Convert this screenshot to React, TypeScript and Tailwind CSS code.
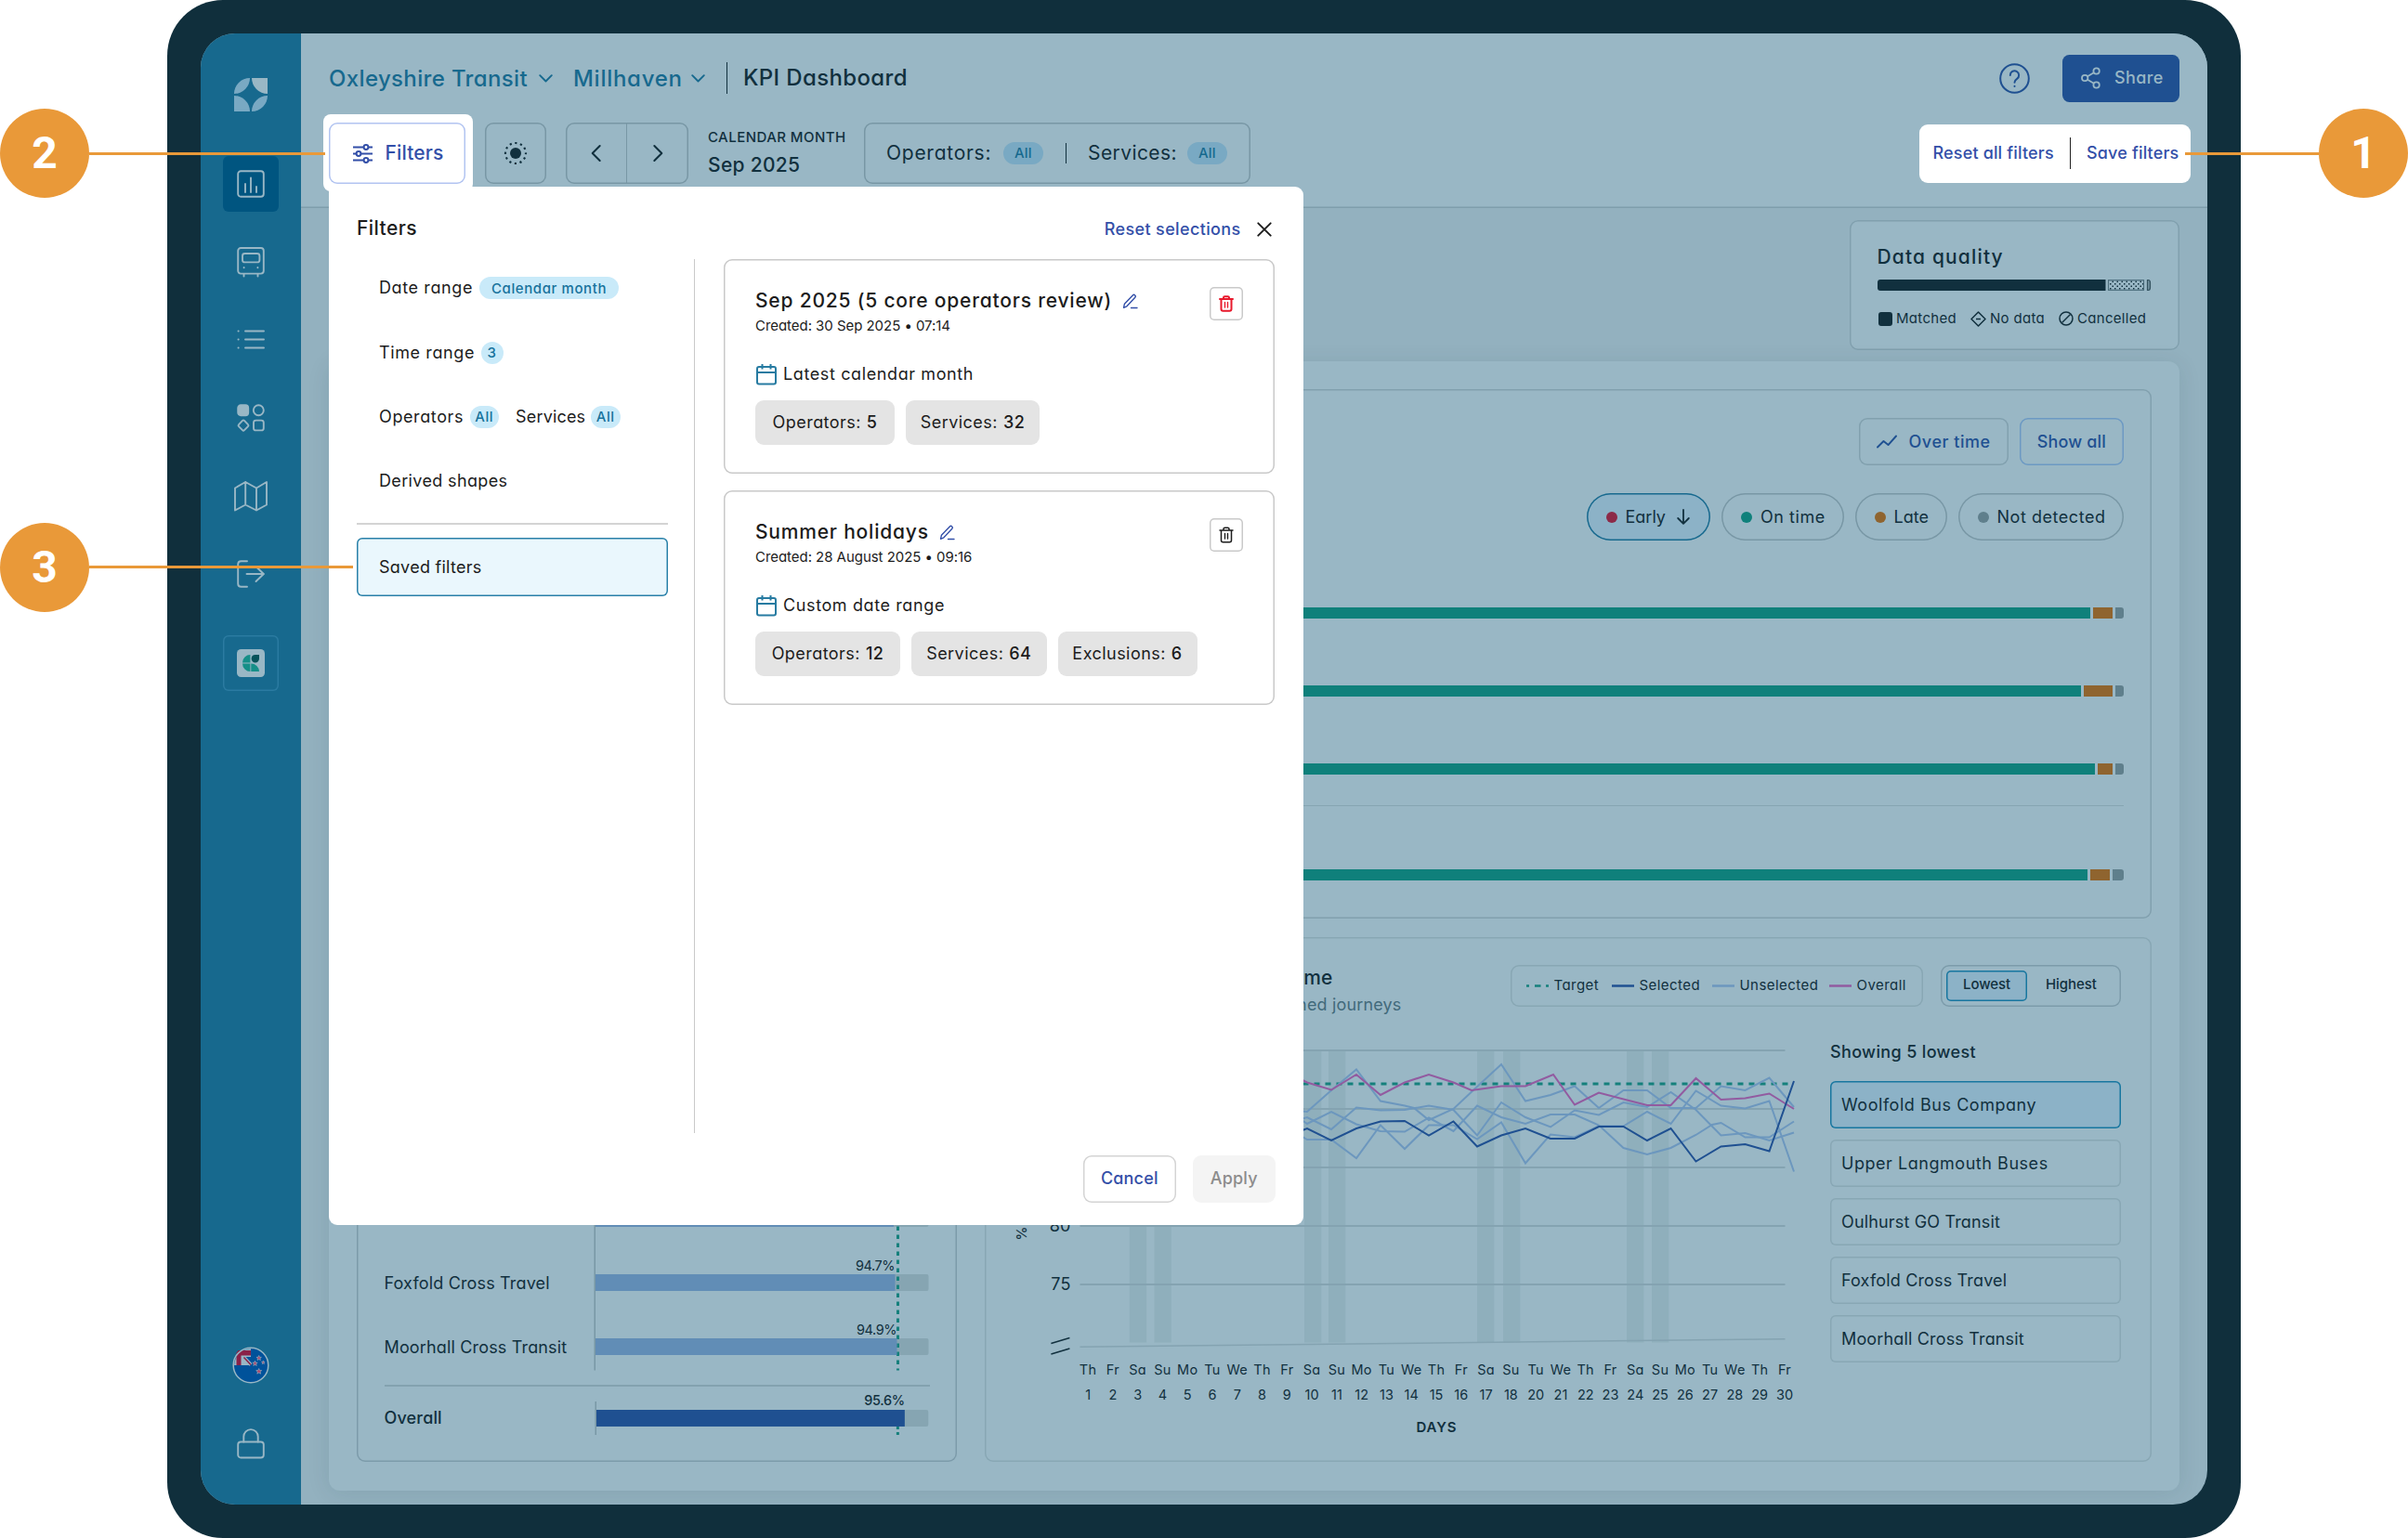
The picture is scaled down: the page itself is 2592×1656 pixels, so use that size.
import type { ReactNode } from "react";

const DAY_NAMES = "Th Fr Sa Su Mo Tu We Th Fr Sa Su Mo Tu We Th Fr Sa Su Tu We Th Fr Sa Su Mo Tu We Th Fr".split(" ");
const DAY_NUMBERS = [1, 2, 3, 4, 5, 6, 7, 8, 9, 10, 11, 12, 13, 14, 15, 16, 17, 18, 20, 21, 22, 23, 24, 25, 26, 27, 28, 29, 30];

const WEEKENDS = [1215.8, 1242.5, 1404, 1430, 1590, 1618, 1751, 1778];

const UNSELECTED_LINES = [
  "1402,1196.5 1407,1197 1433,1174 1460,1151.5 1486,1185.5 1512,1190.5 1522,1193 1538,1206 1564.5,1194 1590,1170 1616,1146 1642,1185.5 1669,1179 1695,1169.5 1721,1193 1747.5,1174 1773,1174 1798.5,1193 1825.5,1193 1852.5,1169.5 1878.5,1174 1904.5,1160.5 1931,1192",
  "1402,1206.5 1407,1210 1433,1197 1460,1210.5 1486,1218 1512,1218.5 1538,1203.5 1564.5,1218 1590,1190.5 1616,1203 1642,1210 1669,1200 1695,1200 1721,1211.5 1747.5,1236 1773,1243 1798.5,1236 1825.5,1222 1843,1211 1852.5,1209 1878.5,1224.5 1904.5,1224.5 1931,1207.5",
  "1402,1204.5 1407,1203 1433,1216 1460,1192.5 1486,1195.5 1512,1195 1538,1190.5 1564.5,1195 1590,1222.5 1616,1187 1642,1203 1669,1213.5 1695,1195.5 1721,1200.5 1747.5,1187 1773,1192 1798.5,1176 1825.5,1195 1852.5,1222.5 1878.5,1220 1904.5,1228 1931,1219.5",
  "1402,1224 1407,1227 1433,1227 1460,1247 1486,1211.5 1512,1237 1538,1211.5 1564.5,1211.5 1590,1226.5 1616,1208.5 1642,1252.5 1669,1221.5 1695,1224.5 1721,1212.5 1747.5,1212.5 1773,1197 1798.5,1210 1825.5,1174.5 1852.5,1190.5 1878.5,1193.5 1904.5,1185.5 1931,1261.5",
];
const OVERALL_LINE =
  "1402,1163 1407,1165.5 1433,1173.5 1460,1157 1486,1179 1512,1165.5 1538,1157 1564.5,1165.5 1584,1174 1616,1169.5 1642,1169.5 1672,1157 1695,1189.5 1721,1176.5 1747.5,1183.5 1773,1190 1798.5,1190 1825.5,1161 1852.5,1184 1878.5,1182.5 1904.5,1177.5 1931,1194";
const SELECTED_LINE =
  "1402,1217 1407,1215 1433,1228 1460,1215 1486,1207.5 1512,1207 1538,1222.5 1564.5,1207.5 1590,1234.5 1616,1222.5 1642,1215 1669,1226 1695,1226 1721,1213 1747.5,1213 1773,1228 1798.5,1215 1825.5,1250.5 1852.5,1234.5 1878.5,1232 1904.5,1239.5 1931,1164";

const OPERATORS = ["Woolfold Bus Company", "Upper Langmouth Buses", "Oulhurst GO Transit", "Foxfold Cross Travel", "Moorhall Cross Transit"];

function Chevron({ className }: { className?: string }) {
  return (
    <svg className={className} width="15" height="9" viewBox="0 0 15 9" fill="none" stroke="currentColor" strokeWidth="1.9" strokeLinecap="round" strokeLinejoin="round">
      <path d="M1.2 1.2 7.5 7.5l6.3-6.3" />
    </svg>
  );
}

function Logo() {
  return (
    <svg width="36" height="36" viewBox="0 0 36 36" fill="#79a9c3">
      <path d="M0 17A17 17 0 0 1 17 0 17 17 0 0 1 0 17Z" />
      <path d="M19 0H36V17A17 17 0 0 1 19 0Z" fill="#99b7c5" />
      <path d="M0 36V19A17 17 0 0 1 17 36Z" />
      <path d="M36 19A17 17 0 0 1 19 36 17 17 0 0 1 36 19Z" />
    </svg>
  );
}

function NavIcon({ children }: { children: ReactNode }) {
  return (
    <svg width="36" height="36" viewBox="0 0 36 36" fill="none" stroke="#99b7c5" strokeWidth="1.9" strokeLinecap="round" strokeLinejoin="round">
      {children}
    </svg>
  );
}

function Sidebar() {
  return (
    <aside className="flex w-[108px] shrink-0 flex-col items-center bg-[#17698e] pt-12 pb-9">
      <Logo />
      <nav className="mt-12 flex flex-col gap-6">
        <div className="flex size-[60px] items-center justify-center rounded-md bg-[#005580]">
          <NavIcon>
            <rect x="4.2" y="4.2" width="27.6" height="27.6" rx="3" />
            <path d="M12 18v9M18 11.5V27M24 21v6" />
          </NavIcon>
        </div>
        <div className="flex size-[60px] items-center justify-center">
          <NavIcon>
            <rect x="4.2" y="3" width="27.6" height="27.6" rx="3" />
            <rect x="9" y="9" width="18.4" height="9.4" rx="2.5" />
            <path d="M10.5 31v2.6M25.5 31v2.6M10.6 24v.3M25.4 24v.3" />
          </NavIcon>
        </div>
        <div className="flex size-[60px] items-center justify-center">
          <NavIcon>
            <path d="M12 8.5h20M12 17.5h20M12 26.5h20M4.5 8.5h.2M4.5 17.5h.2M4.5 26.5h.2" />
          </NavIcon>
        </div>
        <div className="flex size-[60px] items-center justify-center">
          <NavIcon>
            <rect x="4.2" y="4.2" width="11" height="11" rx="3" fill="#99b7c5" />
            <circle cx="26.3" cy="9.7" r="5.5" />
            <path d="M9 20.9q1-1 2 0l4 4.3q1 1 0 2l-4 4q-1 1-2 0l-4-4q-1-1 0-2z" />
            <rect x="21" y="20.6" width="10.8" height="10.8" rx="2.5" />
          </NavIcon>
        </div>
        <div className="flex size-[60px] items-center justify-center">
          <NavIcon>
            <path d="M1 9.5 12.2 3 24 9.5 35 3v24.5L24 33.5 12.2 27.5 1 33.5zM12.2 3v24.5M24 9.5v24" />
          </NavIcon>
        </div>
        <div className="flex size-[60px] items-center justify-center">
          <NavIcon>
            <path d="M14 4.2H7.6Q4.2 4.2 4.2 7.6v20.8q0 3.4 3.4 3.4H14M13.5 18H32M23.5 10l8.3 8-8.3 8" />
          </NavIcon>
        </div>
        <div className="mt-3 flex size-[60px] items-center justify-center rounded-md inset-ring-[1.5px] inset-ring-[#2b7ba1]">
          <div className="flex size-[30px] items-center justify-center rounded-[4.5px] bg-[#99b7c5]">
            <svg width="18" height="18" viewBox="0 0 18 18" fill="#158f88">
              <path d="M8.4 0V8.4H0A8.4 8.4 0 0 1 8.4 0ZM0 9.4H8.4V18A8.6 8.6 0 0 1 0 9.4ZM9.3 9.6A8.6 8.6 0 0 1 18 18H9.3Z" />
              <path d="M9.6 4.3A4.4 4.4 0 0 1 14 0h4v4.3A4.2 4.2 0 0 1 9.6 4.3Z" fill="#06535a" />
            </svg>
          </div>
        </div>
      </nav>
      <div className="mt-auto flex flex-col gap-6">
        <div className="flex size-[60px] items-center justify-center">
          <svg width="40" height="40" viewBox="0 0 40 40">
            <circle cx="20" cy="20" r="18.6" fill="#00529a" />
            <path d="M20 2.2V20H2.2A17.8 17.8 0 0 1 20 2.2Z" fill="#99b7c5" />
            <path d="M4.5 20V6.5L6.5 4H20V9.5H9.5V20Z" fill="#8a2148" />
            <path d="M13 11H20V18Z" fill="#00529a" />
            <path d="M12 11 20 19.5" stroke="#99b7c5" strokeWidth="4" />
            <path d="M12.5 11.5 20 19.5" stroke="#8a2148" strokeWidth="1.6" />
            <g fill="#b0496c" stroke="#99b7c5" strokeWidth=".6">
              <path d="m28.7 9.5.8 1.8 1.9.1-1.5 1.3.5 1.9-1.7-1-1.7 1 .5-1.9-1.5-1.3 1.9-.1z" />
              <path d="m24.5 15.3.8 1.8 1.9.1-1.5 1.3.5 1.9-1.7-1-1.7 1 .5-1.9-1.5-1.3 1.9-.1z" />
              <path d="m33.3 15 .5 1.3 1.3.1-1 .9.3 1.3-1.1-.7-1.1.7.3-1.3-1-.9 1.3-.1z" />
              <path d="m28.7 23.5.9 2 2.1.1-1.6 1.5.5 2.1-1.9-1.1-1.9 1.1.5-2.1-1.6-1.5 2.1-.1z" />
            </g>
            <circle cx="20" cy="20" r="18.8" fill="none" stroke="#99b7c5" strokeWidth="1.5" />
          </svg>
        </div>
        <div className="flex size-[60px] items-center justify-center">
          <NavIcon>
            <rect x="4.2" y="16.5" width="27.6" height="17" rx="3" />
            <path d="M10.3 16.5v-5.700a7.7 7.7 0 0 1 15.400 0v5.700" />
          </NavIcon>
        </div>
      </div>
    </aside>
  );
}

function Header() {
  return (
    <header className="h-[187.5px] shrink-0 bg-[#99b7c5] px-[30px] pt-[22.5px] shadow-[inset_0_-1.5px_0_#7f9eac]">
      <div className="flex h-[51px] items-center text-2xl font-medium tracking-[0.015em] text-[#17698e]">
        <span className="w-[226px] pt-[2px] whitespace-nowrap">Oxleyshire Transit</span>
        <Chevron />
        <span className="ml-[22px] w-[127px] pt-[2px] tracking-[0.03em] whitespace-nowrap">Millhaven</span>
        <Chevron />
        <span className="ml-[23px] h-[34px] w-px bg-[#11303e]" />
        <span className="ml-[17px] whitespace-nowrap text-[#11303e]">KPI Dashboard</span>
        <svg className="ml-auto" width="33" height="33" viewBox="0 0 33 33" fill="none" stroke="#1f5091" strokeWidth="2" strokeLinecap="round">
          <circle cx="16.5" cy="16.5" r="15.3" />
          <path d="M11.8 13a4.7 4.7 0 1 1 7.3 3.9c-1.800 1.200-2.600 2-2.600 3.900M16.5 24.700v.2" />
        </svg>
        <button className="ml-[35px] flex h-[51px] w-[126px] items-center rounded-[7.5px] bg-[#1f5091] pl-[20px] text-lg font-medium text-[#99b7c5]">
          <svg className="mr-[15px]" width="21" height="24" viewBox="0 0 21 24" fill="none" stroke="currentColor" strokeWidth="1.8">
            <circle cx="4.2" cy="12" r="3.2" />
            <circle cx="16.6" cy="4.5" r="3.2" />
            <circle cx="16.6" cy="19.5" r="3.2" />
            <path d="m7 10.300 6.800-4.100M7 13.700l6.800 4.100" />
          </svg>
          Share
        </button>
      </div>

      <div className="mt-[22.5px] flex h-[66px] items-center">
        <div className="relative h-[66px] w-[147px]">
          <div className="absolute -top-[9px] -right-[8px] -bottom-[8px] -left-[6.5px] rounded-[8px] bg-white" />
          <button className="relative flex size-full items-center rounded-[9px] pl-[26px] text-[21px] font-medium text-[#334fa8] inset-ring-[1.5px] inset-ring-[#b2c4f1]">
            <svg className="mr-[13.5px]" width="21" height="21" viewBox="0 0 21 21" fill="none" stroke="currentColor" strokeWidth="2">
              <path d="M0 3.500h11.500M16.500 3.500H21M0 10.500h3.500M8.500 10.500H21M0 17.500h11.500M16.500 17.500H21" />
              <circle cx="14" cy="3.5" r="2.4" />
              <circle cx="6" cy="10.5" r="2.4" />
              <circle cx="14" cy="17.5" r="2.4" />
            </svg>
            Filters
          </button>
        </div>
        <button className="ml-[21px] flex size-[66px] items-center justify-center rounded-[9px] inset-ring-[1.5px] inset-ring-[#7897a5]">
          <svg width="26" height="26" viewBox="0 0 26 26">
            <circle cx="13" cy="13" r="6" fill="#11303e" />
            <circle cx="13" cy="13" r="11" fill="none" stroke="#11303e" strokeWidth="2.2" strokeDasharray="2.2 3.56" strokeDashoffset="1.1" />
          </svg>
        </button>
        <div className="ml-[21px] flex h-[66px] w-[132px] items-center rounded-[9px] text-[#11303e] inset-ring-[1.5px] inset-ring-[#7897a5]">
          <div className="flex h-full w-[65px] items-center justify-center">
            <Chevron className="h-[12px] w-[19px] rotate-90 stroke-[1.6]" />
          </div>
          <div className="flex h-full w-[67px] items-center justify-center border-l border-[#7897a5]">
            <Chevron className="h-[12px] w-[19px] -rotate-90 stroke-[1.6]" />
          </div>
        </div>
        <div className="ml-[21px] flex w-[168px] flex-col text-[#11303e]">
          <span className="text-[15px] leading-[24px] font-medium tracking-[0.03em] whitespace-nowrap">CALENDAR MONTH</span>
          <span className="pt-px text-[21px] leading-[34px] font-medium tracking-[0.015em]">Sep 2025</span>
        </div>
        <div className="flex h-[66px] w-[415.5px] items-center rounded-[9px] pl-[24px] text-[21px] text-[#11303e] inset-ring-[1.5px] inset-ring-[#7897a5]">
          <span className="w-[125.5px] tracking-[0.035em]">Operators:</span>
          <span className="flex h-6 w-[43.5px] items-center justify-center rounded-full bg-[#79a9c3] text-[15px] font-medium text-[#17698e]">All</span>
          <span className="ml-[24px] h-[22px] w-px bg-[#11303e]" />
          <span className="ml-[23px] w-[106.5px] tracking-[0.02em]">Services:</span>
          <span className="flex h-6 w-[43.5px] items-center justify-center rounded-full bg-[#79a9c3] text-[15px] font-medium text-[#17698e]">All</span>
        </div>
        <div className="-mr-[12px] ml-auto flex h-[63px] w-[292.5px] items-center rounded-[9px] bg-white pl-[15px] text-lg font-medium whitespace-nowrap text-[#334fa8]">
          <span className="w-[147.5px]">Reset all filters</span>
          <span className="h-[34.5px] w-px bg-[#222]" />
          <span className="ml-[17px]">Save filters</span>
        </div>
      </div>
    </header>
  );
}

function DataQuality() {
  return (
    <section className="ml-auto h-[139.5px] w-[355px] rounded-[9px] bg-[#99b7c5] px-[29.5px] pt-[24px] text-[#11303e] inset-ring-[1.5px] inset-ring-[#81a0ae]">
      <h2 className="text-[21px] leading-[32px] font-medium tracking-[0.055em]">Data quality</h2>
      <svg className="mt-[7px]" width="295" height="14" viewBox="0 0 295 14">
        <defs>
          <pattern id="dots" width="5" height="5" patternUnits="userSpaceOnUse">
            <rect x="0" y="0" width="1.5" height="1.5" fill="#11303e" />
            <rect x="2.5" y="2.5" width="1.5" height="1.5" fill="#11303e" />
          </pattern>
        </defs>
        <path d="M3 1H245.500V13H3Q0 13 0 10V4Q0 1 3 1Z" fill="#11303e" />
        <rect x="248.5" y="1.7" width="38" height="10.6" fill="url(#dots)" stroke="#4a6c7b" strokeWidth="1.2" />
        <path d="M290.500 1.500h1q2 0 2 3v5q0 3-2 3h-1z" fill="#6f8f9d" stroke="#33525f" strokeWidth="1.2" />
      </svg>
      <div className="mt-[18px] flex items-center text-[15px] leading-[22px] tracking-[0.02em] whitespace-nowrap">
        <span className="mr-[4.5px] ml-[1px] size-[15px] rounded-[3px] bg-[#11303e]" />
        <span className="w-[80px]">Matched</span>
        <svg className="mr-[4px]" width="17" height="17" viewBox="0 0 17 17" fill="none" stroke="currentColor" strokeWidth="1.5" strokeLinejoin="round">
          <path d="M8.500 1 16 8.500 8.500 16 1 8.500zM6 8.500h5" />
        </svg>
        <span className="w-[74px]">No data</span>
        <svg className="mr-[4px]" width="16" height="16" viewBox="0 0 16 16" fill="none" stroke="currentColor" strokeWidth="1.5">
          <circle cx="8" cy="8" r="7" />
          <path d="m3.500 12.500 9-9" />
        </svg>
        <span>Cancelled</span>
      </div>
    </section>
  );
}

const PUNCTUALITY_ROWS = [
  { late: "w-[21px]", none: "w-[9px]" },
  { late: "w-[31.5px]", none: "w-[9px]" },
  { late: "w-[16.5px]", none: "w-[9px]" },
];

function PunctualityBar({ late, none }: { late: string; none: string }) {
  return (
    <div className="ml-[258px] flex h-[12px] gap-[3px]">
      <div className="flex-1 bg-[#0f807b]" />
      <div className={`bg-[#8f642f] ${late}`} />
      <div className={`rounded-r-[3px] bg-[#5f7f8c] ${none}`} />
    </div>
  );
}

function Punctuality() {
  const pill = "flex h-[51px] items-center rounded-full pl-[21px] inset-ring-[1.5px]";
  return (
    <section className="flex h-[570px] flex-col rounded-[9px] px-[30px] pt-[31.5px] text-lg text-[#11303e] inset-ring-[1.5px] inset-ring-[#81a0ae]">
      <div className="flex justify-end gap-3 font-medium text-[#1f5091]">
        <button className="flex h-[51px] w-[160.5px] items-center rounded-[9px] pl-[18.5px] tracking-[0.03em] inset-ring-[1.5px] inset-ring-[#81a0ae]">
          <svg className="mr-[13px]" width="22" height="15" viewBox="0 0 22 15" fill="none" stroke="currentColor" strokeWidth="1.9" strokeLinecap="round" strokeLinejoin="round">
            <path d="M1 13.500 7.500 7l5 4L21 1.500" />
          </svg>
          Over time
        </button>
        <button className="flex h-[51px] w-[112.5px] items-center justify-center rounded-[9px] inset-ring-[1.5px] inset-ring-[#6c99c3]">Show all</button>
      </div>
      <div className="mt-[30px] flex justify-end gap-3 tracking-[0.03em]">
        <div className={`${pill} w-[133.5px] bg-[#8cb2c7] tracking-normal inset-ring-[#17698e]`}>
          <span className="mr-[9px] size-3 rounded-full bg-[#8c2a48]" />
          Early
          <svg className="ml-[12px]" width="14" height="17" viewBox="0 0 14 17" fill="none" stroke="currentColor" strokeWidth="1.8" strokeLinecap="round" strokeLinejoin="round">
            <path d="M7 1v14.500M1.200 10 7 15.800 12.800 10" />
          </svg>
        </div>
        <div className={`${pill} w-[131.5px] inset-ring-[#7897a5]`}>
          <span className="mr-[9px] size-3 rounded-full bg-[#0f807b]" />
          On time
        </div>
        <div className={`${pill} w-[99px] tracking-normal inset-ring-[#7897a5]`}>
          <span className="mr-[9px] size-3 rounded-full bg-[#8f642f]" />
          Late
        </div>
        <div className={`${pill} w-[178.5px] inset-ring-[#7897a5]`}>
          <span className="mr-[9px] size-3 rounded-full bg-[#5f7f8c]" />
          Not detected
        </div>
      </div>
      <div className="mt-[72px] flex flex-col gap-[72px]">
        {PUNCTUALITY_ROWS.map((row, i) => (
          <PunctualityBar key={i} {...row} />
        ))}
      </div>
      <div className="mt-[33px] mb-[68px] h-px bg-[#86a5b2]" />
      <PunctualityBar late="w-[21px]" none="w-[12px]" />
    </section>
  );
}

function OperatorScores() {
  return (
    <section className="flex w-[646px] flex-col justify-end rounded-[9px] px-[29.5px] pb-[26px] text-lg text-[#11303e] inset-ring-[1.5px] inset-ring-[#7c9baa]">
      <div className="flex">
        <div className="w-[227px]">
          {OPERATORS.slice(2).map((name, i) => (
            <div key={name} className={`flex h-[69px] items-center whitespace-nowrap ${i === 0 ? "pb-[4px]" : ""}`}>
              {name}
            </div>
          ))}
        </div>
        <svg width="362" height="207" viewBox="640 1278.5 362 207" className="overflow-visible text-[14.5px] tracking-[-0.03em]" fill="#11303e">
          <g fill="#86a5b2">
            <rect x="642" y="1303.5" width="358.5" height="18" rx="2" />
            <rect x="642" y="1372.5" width="358.5" height="18" rx="2" />
            <rect x="642" y="1441.5" width="358.5" height="18" rx="2" />
          </g>
          <path d="M967.500 1303V1476" stroke="#15807c" strokeWidth="3" strokeDasharray="4.5 4.5" />
          <g fill="#618db6">
            <rect x="642" y="1303.5" width="321" height="18" />
            <rect x="642" y="1372.5" width="322.5" height="18" />
            <rect x="642" y="1441.5" width="324.5" height="18" />
          </g>
          <path d="M641.250 1279V1476" stroke="#7897a5" strokeWidth="1.5" />
          <text x="964" y="1368" textAnchor="end">94.7%</text>
          <text x="966" y="1437" textAnchor="end">94.9%</text>
        </svg>
      </div>
      <div className="mt-[6px] h-[1.5px] bg-[#83a2af]" />
      <div className="flex font-medium">
        <div className="flex w-[227px] items-center pt-[13px]">Overall</div>
        <svg width="362" height="55" viewBox="640 1493 362 55" className="text-[14.5px] tracking-[-0.02em]" fill="#11303e">
          <path d="M967.500 1536V1545" stroke="#15807c" strokeWidth="3" strokeDasharray="3 3" />
          <rect x="642" y="1518" width="358.5" height="18" rx="2" fill="#86a5b2" />
          <rect x="642" y="1518" width="333" height="18" fill="#1f5091" />
          <path d="M641.250 1509V1545" stroke="#7897a5" strokeWidth="1.5" />
          <text x="975" y="1512.5" textAnchor="end">95.6%</text>
        </svg>
      </div>
    </section>
  );
}

function LegendLine({ color, dash }: { color: string; dash?: string }) {
  return (
    <svg className="mr-[6px] shrink-0" width="24" height="3" viewBox="0 0 24 3">
      <path d="M0 1.500H24" stroke={color} strokeWidth="2.5" strokeDasharray={dash} />
    </svg>
  );
}

function TimeChart() {
  return (
    <svg width="850" height="340" viewBox="1090 1122 850 340" fill="none" className="text-lg">
      <g fill="#8fafbc">
        {WEEKENDS.map((x) => (
          <rect key={x} x={x} y="1131" width="18.3" height="314.5" />
        ))}
      </g>
      <g stroke="#84a3b1" strokeWidth="1.8">
        <path d="M1162.500 1131H1921.500M1162.500 1194H1921.500M1162.500 1257H1921.500M1162.500 1320H1921.500M1162.500 1383H1921.500" />
        <path d="M1162.500 1450.200 1921.500 1441.700" strokeWidth="1.5" />
      </g>
      <path d="M1162.500 1167H1926" stroke="#15807c" strokeWidth="3" strokeDasharray="6 6" />
      <g strokeWidth="2">
        {UNSELECTED_LINES.map((points) => (
          <polyline key={points} points={points} stroke="#6c97be" />
        ))}
        <polyline points={OVERALL_LINE} stroke="#925ba0" />
        <polyline points={SELECTED_LINE} stroke="#1f5091" />
      </g>
      <path d="m1131.400 1446.500 20-6M1131.400 1458l20-6" stroke="#11303e" strokeWidth="1.5" />
      <g fill="#11303e">
        <text x="1152.5" y="1326" textAnchor="end">80</text>
        <text x="1152.5" y="1389" textAnchor="end">75</text>
        <text transform="translate(1105 1328) rotate(-90)" textAnchor="middle" className="text-[15px] font-medium">
          %
        </text>
      </g>
    </svg>
  );
}

function Performance() {
  return (
    <section className="w-[1255.5px] rounded-[9px] pt-[30px] pr-[33px] pl-[30px] text-[#11303e] inset-ring-[1.5px] inset-ring-[#88a7b4]">
      <div className="flex h-[72px] items-start text-[15px]">
        <div className="flex w-[418.5px] flex-col items-end whitespace-nowrap">
          <h2 className="mr-[74px] text-[21px] leading-[28px] font-medium">On-time performance over time</h2>
          <p className="text-lg leading-[29px] text-[#426a7b]">On-time journeys, % of planned journeys</p>
        </div>
        <div className="ml-auto flex h-[45px] w-[444px] items-center rounded-[9px] pl-[16.5px] inset-ring-[1.5px] inset-ring-[#88a7b4]">
          <LegendLine color="#15807c" dash="3 6 6.5 5.5 3.5" />
          <span className="w-[62px] tracking-[0.03em]">Target</span>
          <LegendLine color="#1f5091" />
          <span className="w-[78px] tracking-[0.03em]">Selected</span>
          <LegendLine color="#6c97be" />
          <span className="w-[96px] tracking-[0.03em]">Unselected</span>
          <LegendLine color="#925ba0" />
          <span className="tracking-[0.03em]">Overall</span>
        </div>
        <div className="ml-[19px] flex h-[45px] w-[193.5px] items-center rounded-[9px] px-[6px] font-medium tracking-[-0.005em] inset-ring-[1.5px] inset-ring-[#7c9baa]">
          <span className="flex h-[33px] w-[87px] items-center justify-center rounded-[5px] bg-[#8cb2c7] pb-px inset-ring-[1.5px] inset-ring-[#17769f]">Lowest</span>
          <span className="ml-[20px] pb-px">Highest</span>
        </div>
      </div>
      <div className="mt-[11.5px] flex justify-between">
        <div className="w-[850px]">
          <TimeChart />
          <div className="ml-[67.700px] grid w-[776.700px] grid-cols-[repeat(29,minmax(0,1fr))] text-[14.5px] leading-[26.500px]">
            {DAY_NAMES.map((name, i) => (
              <span key={i} className="flex justify-center tracking-[0.02em]">
                {name}
              </span>
            ))}
            {DAY_NUMBERS.map((n) => (
              <span key={n} className="flex justify-center tracking-normal">
                {n}
              </span>
            ))}
          </div>
          <div className="mt-[9px] ml-[68px] w-[777px] text-center text-[15px] leading-[26px] font-semibold tracking-[0.06em]">DAYS</div>
        </div>
        <div className="flex w-[312.5px] flex-col gap-3 text-lg whitespace-nowrap">
          <h3 className="mb-[9px] leading-[21px] font-medium tracking-[0.02em]">Showing 5 lowest</h3>
          {OPERATORS.map((name, i) => (
            <div
              key={name}
              className={`flex h-[51px] items-center rounded-[6px] pl-[12px] inset-ring-[1.5px] ${
                i < 2 ? "tracking-[0.03em]" : ""
              } ${i === 0 ? "bg-[#8cb2c7] inset-ring-[#17769f]" : "inset-ring-[#88a7b4]"}`}
            >
              {name}
            </div>
          ))}
        </div>
      </div>
    </section>
  );
}

function Badge({ children, className = "" }: { children: ReactNode; className?: string }) {
  return (
    <span className={`flex h-6 items-center justify-center rounded-full bg-[#c9eaf9] pt-px text-[15px] font-medium tracking-[0.04em] whitespace-nowrap text-[#17729c] ${className}`}>
      {children}
    </span>
  );
}

interface SavedFilterProps {
  title: string;
  created: string;
  range: string;
  chips: { label: string; value: number; width: string }[];
  danger?: boolean;
}

function SavedFilter({ title, created, range, chips, danger }: SavedFilterProps) {
  return (
    <article className="relative h-[231px] rounded-[9px] pt-[29px] pl-[34.5px] text-[#1c1c1c] inset-ring-[1.5px] inset-ring-[#c9c9c9]">
      <div className="flex h-[33px] items-center">
        <h3 className="text-[21px] font-medium tracking-[0.038em]">{title}</h3>
        <svg className="ml-[11px]" width="17" height="17" viewBox="0 0 17 17" fill="none" stroke="#334fa8" strokeWidth="1.4" strokeLinecap="round" strokeLinejoin="round">
          <path d="m1.500 15.300.9-4L11.300 1.900q1.200-1.200 2.400 0 1.200 1.100.1 2.400L4.900 13.800zM9.500 15.500h6.500" />
        </svg>
      </div>
      <p className="text-[15px] leading-[19px] tracking-[-0.003em]">{created}</p>
      <div className="mt-[29px] flex h-[27px] items-center text-lg">
        <svg className="mr-[7px] ml-[1px]" width="22" height="24" viewBox="0 0 22 24" fill="none" stroke="#277ba1" strokeWidth="2" strokeLinejoin="round">
          <rect x="1" y="4" width="20" height="18.5" rx="2" />
          <path d="M1 10h20M6.500 1v5.500M15.500 1v5.500" />
        </svg>
        {range}
      </div>
      <div className="mt-[15px] flex gap-3 text-lg">
        {chips.map((chip) => (
          <span key={chip.label} className={`flex h-12 items-center justify-center gap-[6px] rounded-[9px] bg-[#e4e4e4] tracking-[0.025em] ${chip.width}`}>
            {chip.label}: <b className="font-medium">{chip.value}</b>
          </span>
        ))}
      </div>
      <button
        className={`absolute top-[30px] right-[34.5px] flex size-9 items-center justify-center rounded-[5px] inset-ring-[1.5px] inset-ring-[#c9c9c9] ${
          danger ? "text-[#e8192c]" : "text-[#1c1c1c]"
        }`}
      >
        <svg width="16" height="18" viewBox="0 0 16 18" fill="none" stroke="currentColor" strokeWidth={danger ? 2 : 1.5} strokeLinecap="round" strokeLinejoin="round">
          <path d="M1 4h14M2.500 4v10.800q0 2 2 2h7q2 0 2-2V4M5 4V2.600Q5 1.200 6.400 1.200h3.200Q11 1.200 11 2.600V4" />
          <path d="M6.500 7.500v5.500M9.500 7.500v5.500" strokeWidth="1.4" />
        </svg>
      </button>
    </article>
  );
}

function FiltersPanel() {
  return (
    <div className="absolute top-[201px] left-[354px] flex h-[1117.5px] w-[1048.5px] flex-col rounded-[9px] rounded-tl-none bg-white px-[30px] text-lg tracking-[0.034em] text-[#1c1c1c]">
      <div className="flex h-[78px] items-center pt-[13px]">
        <h2 className="text-[21px] font-medium tracking-[0.02em]">Filters</h2>
        <button className="ml-auto font-medium tracking-[0.02em] text-[#334fa8]">Reset selections</button>
        <svg className="mr-[4px] ml-[17px]" width="16" height="16" viewBox="0 0 16 16" stroke="#1c1c1c" strokeWidth="1.9" strokeLinecap="round">
          <path d="M1.300 1.300 14.700 14.700M14.700 1.300 1.300 14.700" />
        </svg>
      </div>
      <div className="flex h-[941px]">
        <div className="w-[334.5px] whitespace-nowrap">
          <ul className="pl-[24px]">
            <li className="flex h-[62px] items-center">
              <span className="w-[108px]">Date range</span>
              <Badge className="w-[150px]">Calendar month</Badge>
            </li>
            <li className="mt-[4px] flex h-[69px] items-center">
              <span className="w-[109.5px]">Time range</span>
              <Badge className="w-6">3</Badge>
            </li>
            <li className="flex h-[69px] items-center">
              <span className="w-[97.5px]">Operators</span>
              <Badge className="w-[31.5px]">All</Badge>
              <span className="ml-[18px] w-[81px] tracking-[0.01em]">Services</span>
              <Badge className="w-[31.5px]">All</Badge>
            </li>
            <li className="flex h-[69px] items-center tracking-[0.02em]">Derived shapes</li>
          </ul>
          <div className="mt-[11px] h-[2px] bg-[#d4d4d4]" />
          <div className="mt-[14px] flex h-[63px] items-center rounded-[6px] bg-[#eaf7fd] pl-[24px] tracking-[0.015em] inset-ring-[1.5px] inset-ring-[#2980a8]">
            Saved filters
          </div>
        </div>
        <div className="ml-[28px] w-[1.5px] bg-[#c9c9c9]" />
        <div className="ml-[30.5px] flex w-[593.5px] flex-col gap-[18px]">
          <SavedFilter
            title="Sep 2025 (5 core operators review)"
            created="Created: 30 Sep 2025 • 07:14"
            range="Latest calendar month"
            chips={[
              { label: "Operators", value: 5, width: "w-[150px]" },
              { label: "Services", value: 32, width: "w-[144px]" },
            ]}
            danger
          />
          <SavedFilter
            title="Summer holidays"
            created="Created: 28 August 2025 • 09:16"
            range="Custom date range"
            chips={[
              { label: "Operators", value: 12, width: "w-[156px]" },
              { label: "Services", value: 64, width: "w-[145.5px]" },
              { label: "Exclusions", value: 6, width: "w-[150px]" },
            ]}
          />
        </div>
      </div>
      <div className="mt-[23.5px] flex justify-end gap-[18px] font-medium tracking-[0.01em]">
        <button className="h-[51px] w-[100.5px] rounded-[9px] text-[#334fa8] inset-ring-[1.5px] inset-ring-[#d4d4d4]">Cancel</button>
        <button className="h-[51px] w-[88.5px] rounded-[9px] bg-[#f4f4f4] text-[#8c8c8c]">Apply</button>
      </div>
    </div>
  );
}

function Callout({ label, className, line }: { label: string; className: string; line: string }) {
  return (
    <div className={`absolute flex items-center ${className}`}>
      <div className="flex size-24 items-center justify-center rounded-full bg-[#e99939] font-['Roboto',sans-serif] text-5xl font-bold text-white">{label}</div>
      <div className={`h-[3px] bg-[#e99939] ${line}`} />
    </div>
  );
}

export default function App() {
  return (
    <div className="relative h-[1656px] w-[2592px] overflow-hidden bg-white px-[180px] font-['Inter','Liberation_Sans',sans-serif] tracking-[0.01em] [font-feature-settings:'cv11']">
      <div className="h-[1656px] rounded-[60px] bg-[#102f3c] p-9">
        <div className="flex h-[1584px] overflow-hidden rounded-[37px] bg-[#93b1bf]">
          <Sidebar />
          <div className="flex flex-1 flex-col">
            <Header />
            <main className="flex flex-1 flex-col px-[30px] pt-[13.5px]">
              <DataQuality />
              <div className="mt-3 flex h-[1216.5px] flex-col gap-[20px] rounded-[12px] bg-[#99b7c5] p-[30px] shadow-[0_3px_24px_rgba(17,48,62,0.1)]">
                <Punctuality />
                <div className="flex h-[565px] gap-[30px]">
                  <OperatorScores />
                  <Performance />
                </div>
              </div>
            </main>
          </div>
        </div>
      </div>
      <FiltersPanel />
      <Callout label="1" className="top-[117px] right-0 flex-row-reverse" line="w-[144px]" />
      <Callout label="2" className="top-[117px] left-0" line="w-[254px]" />
      <Callout label="3" className="top-[562.5px] left-0" line="w-[283.5px]" />
    </div>
  );
}
